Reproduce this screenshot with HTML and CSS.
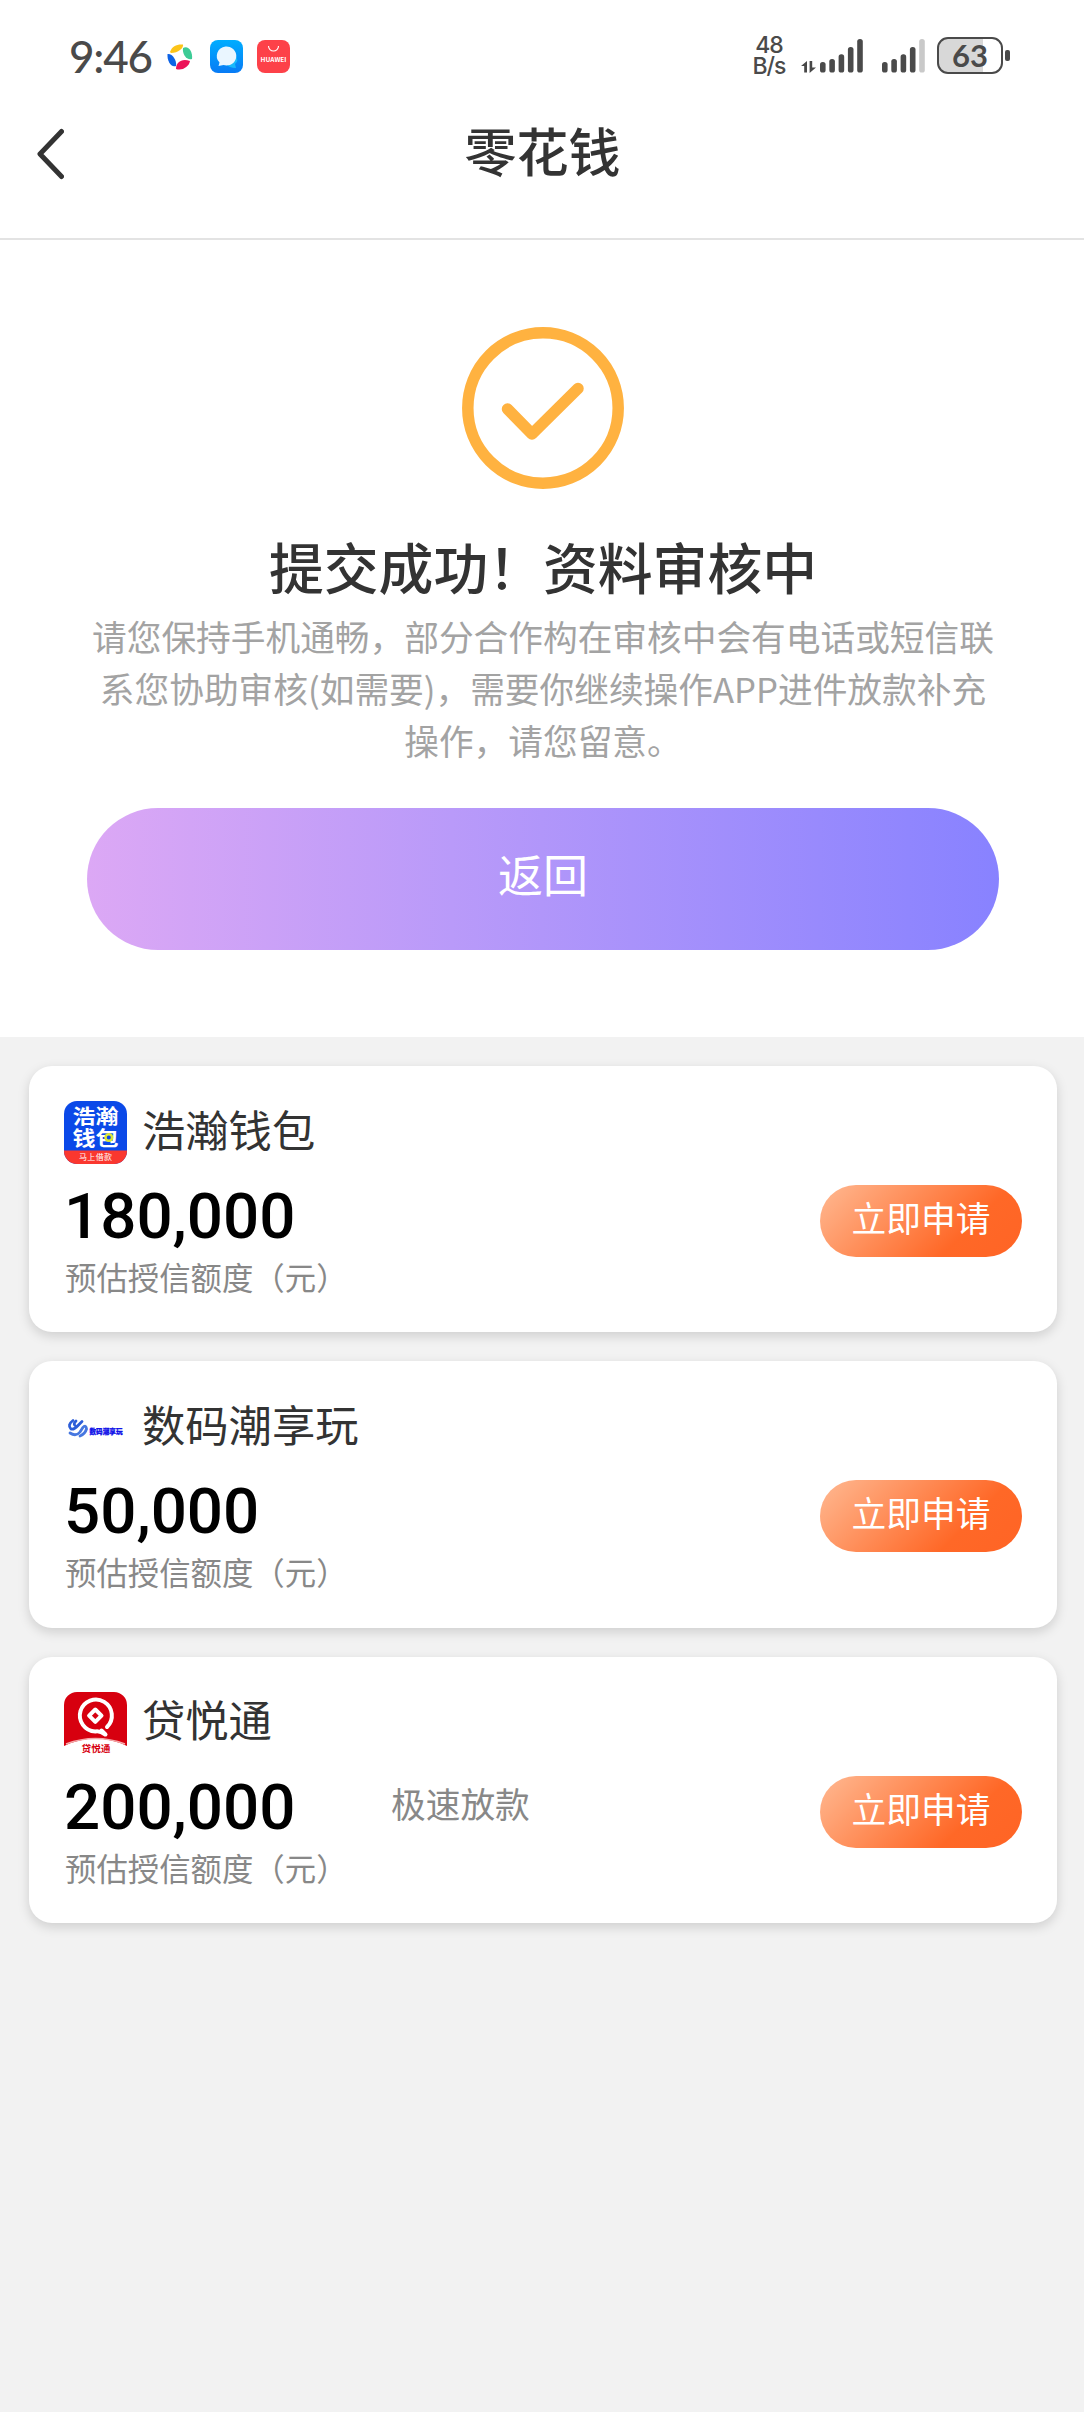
FILE: index.html
```html
<!DOCTYPE html>
<html lang="zh-CN">
<head>
<meta charset="utf-8">
<title>零花钱</title>
<link rel="stylesheet" href="styles.css">
</head>
<body>
<div class="status">
  <span class="time">9:46</span>
  <svg class="pin" width="26" height="26" viewBox="0 0 26 26">
    <path fill="#fcc419" d="M3 8C5 2 10 0 16 .5C17 4 11 9 4 9Z"/>
    <path fill="#3dcb96" d="M16 4C21 1 26 7 25 15C20 17 15 10 16 4Z"/>
    <path fill="#ec1358" d="M9 25C9 18 15 14 23 17C22 23 15 27 9 25Z"/>
    <path fill="#0d63e6" d="M.5 10C5 9 10 16 9 22C4 24 0 17 .5 10Z"/>
  </svg>
  <svg class="msg" width="33" height="33" viewBox="0 0 33 33">
    <defs><linearGradient id="m" x2="0" y2="1"><stop stop-color="#00adff"/><stop offset="1" stop-color="#087bf5"/></linearGradient></defs>
    <rect width="33" height="33" rx="8" fill="url(#m)"/>
    <path fill="#18b9fb" d="M24 14q6 6 1 10l1 4q-7 0-10-4Z"/>
    <path fill="#eaf6ff" d="M15.500 6.500a9.800 9.500 0 1 1-2 18.500l-5 1 1-3.500A9.800 9.500 0 0 1 15.500 6.500Z"/>
  </svg>
  <svg class="hw" width="33" height="33" viewBox="0 0 33 33">
    <rect width="33" height="33" rx="8" fill="#fd4149"/>
    <path d="M11.500 6a5 5 0 0 0 10 0" fill="none" stroke="#fff" stroke-width="1.100"/>
    <text x="16.500" y="21.500" text-anchor="middle" textLength="26" lengthAdjust="spacingAndGlyphs" font-size="6" font-weight="700" fill="#fff">HUAWEI</text>
  </svg>
  <div class="rate"><span>48</span><span>B/s</span></div>
  <svg class="net" width="16" height="12" viewBox="0 0 16 12"><path fill="#484848" d="M6 0v11.500H3.200V5H0ZM8.600 0h2.600v6.500H15L8.600 12Z"/></svg>
  <svg class="bars" width="44" height="34" viewBox="0 0 44 34" fill="#4a4a4a"><rect y="23" width="5.600" height="10.500" rx="2.600"/><rect x="9.300" y="20" width="5.600" height="13.500" rx="2.600"/><rect x="18.600" y="15.300" width="5.600" height="18.200" rx="2.600"/><rect x="27.900" y="8" width="5.600" height="25.500" rx="2.600"/><rect x="37.200" width="5.600" height="33.500" rx="2.600"/></svg>
  <svg class="bars two" width="44" height="34" viewBox="0 0 44 34" fill="#4a4a4a"><rect y="23" width="5.600" height="10.500" rx="2.600"/><rect x="9.300" y="20" width="5.600" height="13.500" rx="2.600"/><rect x="18.600" y="15.300" width="5.600" height="18.200" rx="2.600"/><rect x="27.900" y="8" width="5.600" height="25.500" rx="2.600"/><rect x="37.200" width="5.600" height="33.500" rx="2.600" fill="#c9c9c9"/></svg>
  <span class="battery">63</span><i class="tip"></i>
</div>
<header class="nav">
  <svg class="back" width="28" height="54" viewBox="0 0 28 54"><path d="M25.500 4.500 4 27 25.500 49.500" fill="none" stroke="#333" stroke-width="5" stroke-linecap="round" stroke-linejoin="round"/></svg>
  <h1>零花钱</h1>
</header>
<section class="result">
  <svg class="ok" width="162" height="162" viewBox="0 0 162 162" fill="none" stroke="#ffb240"><circle cx="81" cy="81" r="75.200" stroke-width="11.500"/><path d="M45.500 82 70 107 116 61.500" stroke-width="11.500" stroke-linecap="round" stroke-linejoin="round"/></svg>
  <h2>提交成功！资料审核中</h2>
  <p>请您保持手机通畅，部分合作构在审核中会有电话或短信联<br>系您协助审核(如需要)，需要你继续操作APP进件放款补充<br>操作，请您留意。</p>
  <button class="return">返回</button>
</section>
<main>
  <article class="card">
    <div class="head">
      <svg class="logo" width="63" height="63" viewBox="0 0 63 63">
        <defs><clipPath id="c1"><rect width="63" height="63" rx="13"/></clipPath></defs>
        <g clip-path="url(#c1)"><rect width="63" height="63" fill="#0b49e8"/><rect y="49.500" width="63" height="14" fill="#fa372f"/></g>
        <text x="8.500" y="22.500" font-size="20" textLength="46" lengthAdjust="spacingAndGlyphs" font-weight="700" fill="#fff">浩瀚</text>
        <text x="8.500" y="44.500" font-size="20" textLength="46" lengthAdjust="spacingAndGlyphs" font-weight="700" fill="#fff">钱包</text>
        <circle cx="44.800" cy="36.500" r="3.300" fill="#0b49e8" stroke="#dce637" stroke-width="2.500"/>
        <text x="15" y="59.200" font-size="8" textLength="33" fill="#fff">马上借款</text>
      </svg>
      <h3>浩瀚钱包</h3>
    </div>
    <div class="row"><div class="sum"><strong>180,000</strong><small>预估授信额度（元）</small></div><button class="apply">立即申请</button></div>
  </article>
  <article class="card">
    <div class="head">
      <svg class="logo" width="63" height="63" viewBox="0 0 63 63">
        <g fill="none" stroke="#2d5ed8" stroke-width="2.800" stroke-linecap="round"><path d="M9 24.500Q3 29 7 33Q10 34 14 29.500L18 25.500"/><path d="M12 25Q9 28 11 29.500"/><path stroke="#4677e0" d="M6 37Q12 41 16 36L18.500 32Q22 28 22.500 33Q21 38 16 40"/></g>
        <text x="25.500" y="38" font-size="7" textLength="33" lengthAdjust="spacingAndGlyphs" font-weight="900" fill="#1012e8" stroke="#1012e8" stroke-width=".3">数码潮享玩</text>
      </svg>
      <h3>数码潮享玩</h3>
    </div>
    <div class="row"><div class="sum"><strong>50,000</strong><small>预估授信额度（元）</small></div><button class="apply">立即申请</button></div>
  </article>
  <article class="card">
    <div class="head">
      <svg class="logo" width="63" height="63" viewBox="0 0 63 63">
        <path fill="#d7000f" d="M0 54V13A13 13 0 0 1 13 0H50A13 13 0 0 1 63 13V54Q31.500 39 0 54Z"/>
        <path fill="none" stroke="#f4a9aa" stroke-width="1.500" d="M2 52Q31.500 41 61 52"/>
        <g fill="none" stroke="#fff" stroke-width="4"><path d="M43 35A16 16 0 1 0 31.300 39.500Q36 38.500 41 42.500M37.500 38.500l4 4" stroke-linecap="round"/><path stroke-linejoin="round" d="m31.300 17.500 6.200 6.200-6.200 6.200-6.200-6.200Z"/></g>
        <text x="17.500" y="59.500" font-size="9" textLength="29" lengthAdjust="spacingAndGlyphs" font-weight="700" fill="#d7000f">贷悦通</text>
      </svg>
      <h3>贷悦通</h3>
    </div>
    <div class="row"><div class="sum"><strong>200,000</strong><small>预估授信额度（元）</small></div><span class="tag">极速放款</span><button class="apply">立即申请</button></div>
  </article>
</main>
</body>
</html>
```
FILE: styles.css
```css
* { box-sizing: border-box; margin: 0; padding: 0; }
body { width: 1084px; min-height: 2412px; background: #f2f2f2; color: #333; font-family: "Noto Sans CJK SC", sans-serif; }
svg { display: block; flex: none; }
button { border: 0; font-family: inherit; color: #fff; }

.status { height: 100px; padding: 37px 0 0 69px; display: flex; align-items: flex-start; background: #fff; color: #4a4a4a; }
.time { width: 98px; margin-top: -3px; font: 500 44px/44px Lato, sans-serif; letter-spacing: -1.2px; white-space: nowrap; }
.pin { margin-top: 7px; }
.msg { margin: 3px 0 0 17px; }
.hw { margin: 3px 0 0 14px; }
.rate { display: flex; flex-direction: column; width: 44px; margin: -2px 0 0 457px; font: 500 23px/21px Inter, sans-serif; text-align: center; letter-spacing: -1px; }
.net { margin: 24px 0 0 10px; }
.bars { margin: 2px 0 0 3px; }
.bars.two { margin-left: 18px; }
.battery { width: 66px; height: 37px; margin-left: 11px; border: 2.500px solid #4a4a4a; border-radius: 11px; background: linear-gradient(90deg, #d8d8d8 44px, #fff 44px); font: 700 31px/33px Lato, sans-serif; text-align: center; }
.tip { width: 5px; height: 11px; margin: 13px 0 0 2px; border-radius: 2px; background: #4a4a4a; }

.nav { position: relative; height: 140px; border-bottom: 2px solid #e3e3e3; background: #fff; }
.back { position: absolute; left: 36px; top: 27px; }
h1 { font-size: 52px; line-height: 100px; font-weight: 500; text-align: center; padding-left: 1px; }

.result { height: 797px; padding: 87px 85px 0 87px; background: #fff; text-align: center; display: flex; flex-direction: column; align-items: center; }
h2 { margin-top: 41px; font-size: 54.800px; line-height: 70px; font-weight: 500; white-space: nowrap; }
p { margin-top: 10px; font-size: 34.700px; line-height: 52.200px; color: #a3a3a3; white-space: nowrap; font-weight: 400; }
.return { width: 912px; height: 142px; margin-top: 41px; padding-bottom: 11px; border-radius: 71px; font-size: 45px; background: linear-gradient(90deg, #dca8f5, #b99af9 40%, #8882ff); }

main { display: grid; gap: 29px; padding: 29px 27px 0 29px; }
.card { height: 266.300px; padding: 35px; border-radius: 23px; background: #fff; box-shadow: 0 4px 12px rgba(0,0,0,.15); }
.head { display: flex; align-items: center; height: 63px; gap: 15px; }
h3 { font-size: 43.300px; line-height: 60px; font-weight: 400; padding-bottom: 10px; }
.row { display: flex; align-items: flex-start; }
.sum { width: 327px; }
strong { display: block; margin-top: 19px; font: 500 63.700px/68px Roboto, sans-serif; color: #000; }
small { display: block; font-size: 31.400px; line-height: 40px; margin: 6px 0 0 1px; color: #888; white-space: nowrap; }
.tag { margin-top: 23px; font-size: 34.700px; line-height: 50px; color: #888; }
.apply { width: 202px; height: 72px; margin: 21px 0 0 auto; padding-bottom: 8px; border-radius: 36px; font-size: 34.700px; background: linear-gradient(135deg, #ffb992, #ff6827 70%, #ff6425); }
```
